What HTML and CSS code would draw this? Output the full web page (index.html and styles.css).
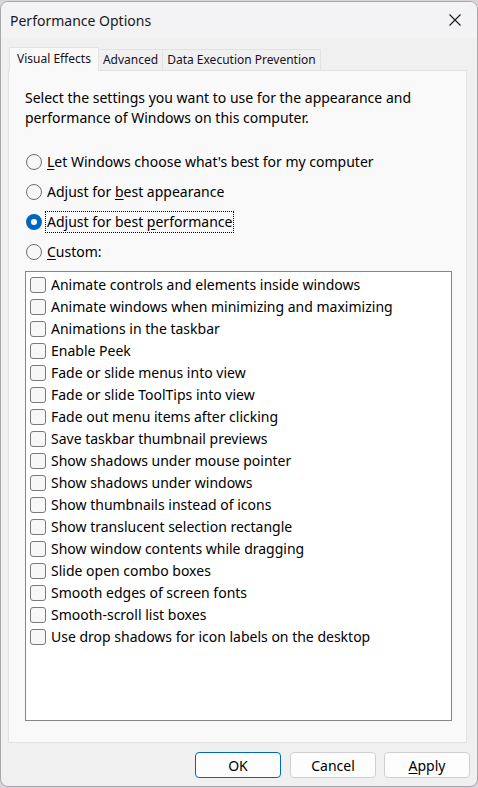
FILE: index.html
```html
<!DOCTYPE html>
<html>
<head>
<meta charset="utf-8">
<link rel="stylesheet" href="styles.css">
</head>
<body>
<div class="window">
  <div class="titlebar">
    <span class="title">Performance Options</span>
    <svg class="close" width="12" height="12" viewBox="0 0 12 12"><path d="M0.5 0.5 L11.5 11.5 M11.5 0.5 L0.5 11.5" stroke="#1a1a1a" stroke-width="1.1" fill="none"/></svg>
  </div>
  <div class="tabs">
    <div class="tab active">Visual Effects</div>
    <div class="tab">Advanced</div>
    <div class="tab">Data Execution Prevention</div>
  </div>
  <div class="panel">
    <p class="intro">Select the settings you want to use for the appearance and performance of Windows on this computer.</p>
    <div class="radios">
      <div class="radio"><span class="dot"></span><span class="lbl"><u>L</u>et Windows choose what's best for my computer</span></div>
      <div class="radio"><span class="dot"></span><span class="lbl">Adjust for <u>b</u>est appearance</span></div>
      <div class="radio"><span class="dot on"></span><span class="lbl focus">Adjust for best <u>p</u>erformance</span></div>
      <div class="radio"><span class="dot"></span><span class="lbl"><u>C</u>ustom:</span></div>
    </div>
    <div class="list">
      <div class="item"><span class="box"></span>Animate controls and elements inside windows</div>
      <div class="item"><span class="box"></span>Animate windows when minimizing and maximizing</div>
      <div class="item"><span class="box"></span>Animations in the taskbar</div>
      <div class="item"><span class="box"></span>Enable Peek</div>
      <div class="item"><span class="box"></span>Fade or slide menus into view</div>
      <div class="item"><span class="box"></span>Fade or slide ToolTips into view</div>
      <div class="item"><span class="box"></span>Fade out menu items after clicking</div>
      <div class="item"><span class="box"></span>Save taskbar thumbnail previews</div>
      <div class="item"><span class="box"></span>Show shadows under mouse pointer</div>
      <div class="item"><span class="box"></span>Show shadows under windows</div>
      <div class="item"><span class="box"></span>Show thumbnails instead of icons</div>
      <div class="item"><span class="box"></span>Show translucent selection rectangle</div>
      <div class="item"><span class="box"></span>Show window contents while dragging</div>
      <div class="item"><span class="box"></span>Slide open combo boxes</div>
      <div class="item"><span class="box"></span>Smooth edges of screen fonts</div>
      <div class="item"><span class="box"></span>Smooth-scroll list boxes</div>
      <div class="item"><span class="box"></span>Use drop shadows for icon labels on the desktop</div>
    </div>
  </div>
  <div class="buttons">
    <button class="btn default">OK</button>
    <button class="btn">Cancel</button>
    <button class="btn"><u>A</u>pply</button>
  </div>
</div>
</body>
</html>
```
FILE: styles.css
```css
* { box-sizing: border-box; }
html, body { margin: 0; padding: 0; }
body {
  width: 478px;
  height: 788px;
  background: #d9d3da;
  font-family: "Noto Sans", "Open Sans", sans-serif;
  font-size: 14px;
  color: #000;
  overflow: hidden;
}
.window {
  margin-top: 1px;
  width: 478px;
  height: 786px;
  background: #f0f0f0;
  border: 1px solid #a8a8a8;
  border-radius: 8px;
  overflow: hidden;
  display: flex;
  flex-direction: column;
}
.titlebar {
  height: 36px;
  flex: none;
  background: #f3f2f5;
  display: flex;
  align-items: center;
  justify-content: space-between;
  padding: 0 16px 0 9px;
}
.title { color: #1a1a1a; font-size: 14px; }
.tabs {
  margin-top: 9px;
  padding-left: 8px;
  display: flex;
  align-items: flex-end;
  height: 23px;
  flex: none;
  position: relative;
  z-index: 1;
}
.tab {
  height: 21px;
  padding: 0 4px;
  border: 1px solid #e3e3e3;
  border-bottom: none;
  background: #f0f0f0;
  line-height: 20px;
  font-size: 12px;
  margin-left: -1px;
  color: #1a1020;
}
.tab.active {
  height: 24px;
  margin-bottom: -1px;
  background: #f9f9f9;
  padding: 0 7px;
  margin-left: 0;
  line-height: 21px;
}
.panel {
  margin: 0 10px 0 7px;
  height: 673px;
  flex: none;
  background: #f9f9f9;
  border: 1px solid #e3e3e3;
  padding: 17px 14px 0 16px;
}
.intro {
  margin: 0;
  line-height: 20px;
  font-size: 14px;
}
.radios { margin-top: 19px; }
.radio {
  height: 30px;
  display: flex;
  align-items: center;
  padding-left: 1px;
}
.dot {
  width: 16px;
  height: 16px;
  border-radius: 50%;
  border: 1px solid #6e6e6e;
  background: #f7f7f7;
  margin-right: 4px;
  flex: none;
}
.dot.on {
  border: 5px solid #0067c0;
  background: #fff;
}
.lbl { line-height: 20px; padding: 0 1px; border: 1px dotted transparent; margin-left: -1px; }
.lbl.focus { border-color: #000; }
u { text-decoration: underline; text-underline-offset: 2px; }
.list {
  margin-top: 4px;
  width: 427px;
  height: 450px;
  background: #fff;
  border: 1px solid #868686;
  padding: 2px 0 0 4px;
}
.item {
  height: 22px;
  display: flex;
  align-items: center;
  line-height: 20px;
}
.box {
  width: 16px;
  height: 16px;
  border: 1px solid #7a7a7a;
  border-radius: 3px;
  background: #f7f7f7;
  margin-right: 5px;
  flex: none;
}
.buttons {
  margin-top: 9px;
  display: flex;
  justify-content: flex-end;
  gap: 8px;
  padding-right: 7px;
}
.btn {
  width: 86px;
  height: 26px;
  font-family: inherit;
  font-size: 14px;
  color: #000;
  background: #fdfdfd;
  border: 1px solid #d0d0d0;
  border-radius: 4px;
  padding: 0;
}
.btn.default {
  border-color: #0067c0;
  margin-right: 1px;
}
```
